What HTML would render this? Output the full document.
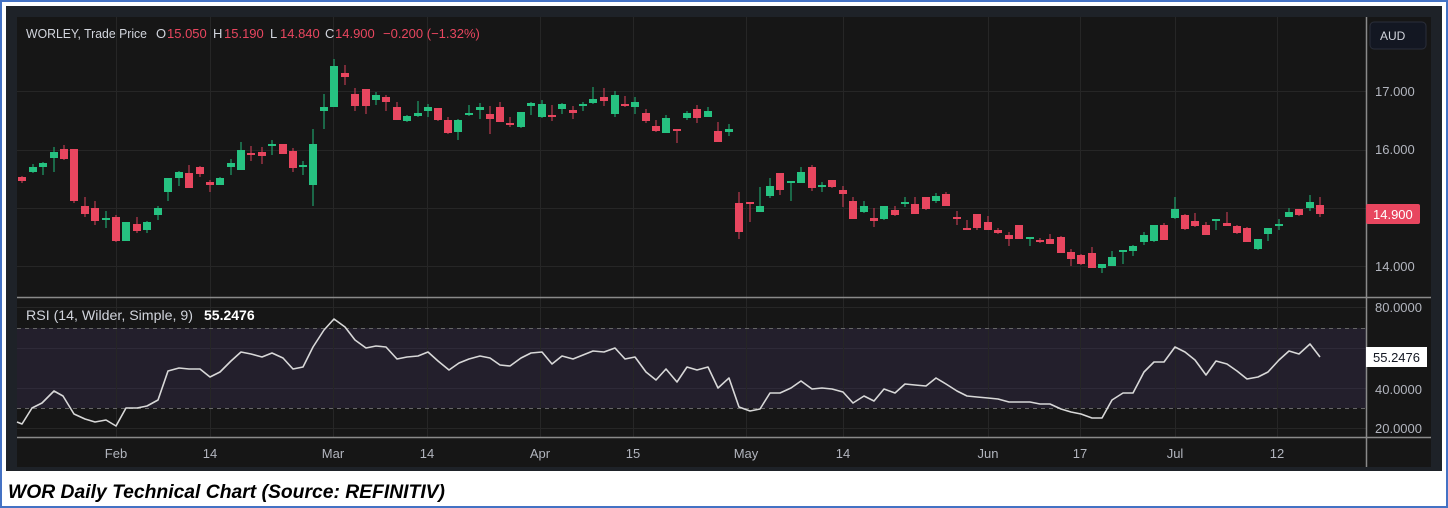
<!DOCTYPE html>
<html><head><meta charset="utf-8"><style>
html,body{margin:0;padding:0;background:#fff;width:1448px;height:508px;overflow:hidden}
svg{display:block}
text{font-family:"Liberation Sans",sans-serif}
</style></head><body>
<svg width="1448" height="508" viewBox="0 0 1448 508" xmlns="http://www.w3.org/2000/svg">
<rect x="1" y="1" width="1446" height="506" fill="#fff" stroke="#4472c4" stroke-width="2"/>
<rect x="6" y="6" width="1436" height="465" fill="#1e2228"/>
<rect x="17" y="17" width="1414" height="450" fill="#161616"/>
<rect x="17" y="328" width="1349" height="80" fill="#231f2c"/>
<g stroke="#262626" stroke-width="1">
<line x1="17" y1="91.5" x2="1366" y2="91.5"/><line x1="17" y1="150.5" x2="1366" y2="150.5"/><line x1="17" y1="208.5" x2="1366" y2="208.5"/><line x1="17" y1="266.5" x2="1366" y2="266.5"/>
<line x1="17" y1="348.5" x2="1366" y2="348.5" stroke="#2e2a38"/><line x1="17" y1="388.5" x2="1366" y2="388.5" stroke="#2e2a38"/><line x1="17" y1="307.5" x2="1366" y2="307.5"/><line x1="17" y1="428.5" x2="1366" y2="428.5"/>
<line x1="116.5" y1="17" x2="116.5" y2="437"/><line x1="210.5" y1="17" x2="210.5" y2="437"/><line x1="333.5" y1="17" x2="333.5" y2="437"/><line x1="427.5" y1="17" x2="427.5" y2="437"/><line x1="540.5" y1="17" x2="540.5" y2="437"/><line x1="633.5" y1="17" x2="633.5" y2="437"/><line x1="746.5" y1="17" x2="746.5" y2="437"/><line x1="843.5" y1="17" x2="843.5" y2="437"/><line x1="988.5" y1="17" x2="988.5" y2="437"/><line x1="1080.5" y1="17" x2="1080.5" y2="437"/><line x1="1175.5" y1="17" x2="1175.5" y2="437"/><line x1="1277.5" y1="17" x2="1277.5" y2="437"/>
</g>
<g stroke="#666" stroke-dasharray="4 4" stroke-width="1"><line x1="17" y1="328.5" x2="1366" y2="328.5"/><line x1="17" y1="408.5" x2="1366" y2="408.5"/></g>
<g stroke="#8a8a8a" stroke-width="1.5"><line x1="17" y1="297.5" x2="1431" y2="297.5"/><line x1="17" y1="437.5" x2="1431" y2="437.5"/><line x1="1366.5" y1="17" x2="1366.5" y2="467"/></g>

<path stroke="#1f9e6a" stroke-width="1.2" fill="none" d="M33 164V173M43 162V175M54 147V172M106 211V228M126 222V241M147 221V233M158 206V220M168 178V201M179 171V186M220 177V185M231 159V175M241 142V170M272 140V155M303 161V175M313 129V206M324 94V129M334 59V107M376 92V105M407 115V122M418 101V117M428 104V117M458 119V140M469 105V116M480 103V119M521 112V128M531 102V115M542 100V118M562 103V114M583 102V111M593 87V104M615 91V117M635 97V114M666 115V133M687 111V120M708 107V117M729 124V136M760 187V212M770 178V198M791 181V201M801 167V183M822 182V192M864 201V213M884 206V220M905 197V207M936 193V203M1030 237V246M1102 264V273M1112 251V266M1123 250V264M1133 245V256M1144 232V245M1154 225V242M1175 197V219M1216 219V230M1258 239V250M1268 228V241M1279 219V230M1289 208V217M1310 195V211"/>
<g fill="#26c281">
<rect x="29" y="167" width="8" height="5"/><rect x="39" y="163" width="8" height="4"/><rect x="50" y="152" width="8" height="6"/><rect x="102" y="218" width="8" height="2"/><rect x="122" y="222" width="8" height="19"/><rect x="143" y="222" width="8" height="8"/><rect x="154" y="208" width="8" height="7"/><rect x="164" y="178" width="8" height="14"/><rect x="175" y="172" width="8" height="6"/><rect x="216" y="178" width="8" height="7"/><rect x="227" y="163" width="8" height="4"/><rect x="237" y="150" width="8" height="20"/><rect x="268" y="144" width="8" height="2"/><rect x="299" y="165" width="8" height="2"/><rect x="309" y="144" width="8" height="41"/><rect x="320" y="107" width="8" height="4"/><rect x="330" y="66" width="8" height="41"/><rect x="372" y="95" width="8" height="5"/><rect x="403" y="116" width="8" height="5"/><rect x="414" y="113" width="8" height="3"/><rect x="424" y="107" width="8" height="4"/><rect x="454" y="120" width="8" height="12"/><rect x="465" y="113" width="8" height="2"/><rect x="476" y="107" width="8" height="3"/><rect x="517" y="112" width="8" height="15"/><rect x="527" y="103" width="8" height="3"/><rect x="538" y="104" width="8" height="13"/><rect x="558" y="104" width="8" height="5"/><rect x="579" y="104" width="8" height="2"/><rect x="589" y="99" width="8" height="4"/><rect x="611" y="95" width="8" height="19"/><rect x="631" y="102" width="8" height="5"/><rect x="662" y="118" width="8" height="15"/><rect x="683" y="113" width="8" height="5"/><rect x="704" y="111" width="8" height="6"/><rect x="725" y="129" width="8" height="3"/><rect x="756" y="206" width="8" height="6"/><rect x="766" y="186" width="8" height="10"/><rect x="787" y="181" width="8" height="2"/><rect x="797" y="172" width="8" height="11"/><rect x="818" y="185" width="8" height="2"/><rect x="860" y="206" width="8" height="6"/><rect x="880" y="206" width="8" height="13"/><rect x="901" y="202" width="8" height="2"/><rect x="932" y="196" width="8" height="5"/><rect x="1026" y="237" width="8" height="2"/><rect x="1098" y="264" width="8" height="4"/><rect x="1108" y="257" width="8" height="9"/><rect x="1119" y="250" width="8" height="2"/><rect x="1129" y="246" width="8" height="5"/><rect x="1140" y="235" width="8" height="7"/><rect x="1150" y="225" width="8" height="16"/><rect x="1171" y="209" width="8" height="9"/><rect x="1212" y="219" width="8" height="2"/><rect x="1254" y="239" width="8" height="10"/><rect x="1264" y="228" width="8" height="6"/><rect x="1275" y="224" width="8" height="2"/><rect x="1285" y="212" width="8" height="5"/><rect x="1306" y="202" width="8" height="6"/>
</g>
<path stroke="#b83a50" stroke-width="1.2" fill="none" d="M22 176V183M64 145V160M74 149V203M85 197V217M95 201V225M116 215V242M137 217V233M189 165V188M200 166V177M210 180V192M251 146V161M262 147V164M283 144V154M293 148V172M345 65V85M355 88V111M366 89V114M386 95V111M397 102V120M438 108V121M448 117V134M490 106V134M500 102V122M510 117V127M552 105V121M573 106V119M604 88V106M625 96V107M646 109V123M656 120V132M677 129V143M697 105V123M718 122V142M739 192V239M750 202V222M780 173V195M812 165V191M832 180V188M843 186V207M853 197V219M874 208V227M895 206V216M915 197V214M926 197V210M946 192V206M957 211V225M967 220V230M977 214V230M988 216V230M998 228V234M1009 232V246M1019 225V239M1040 238V243M1050 234V244M1061 236V253M1071 249V266M1081 254V265M1092 247V268M1164 223V240M1185 214V230M1195 213V227M1206 222V235M1227 212V226M1237 225V234M1247 227V242M1299 209V216M1320 197V217"/>
<g fill="#e8465f">
<rect x="18" y="177" width="8" height="4"/><rect x="60" y="149" width="8" height="10"/><rect x="70" y="149" width="8" height="52"/><rect x="81" y="206" width="8" height="8"/><rect x="91" y="208" width="8" height="13"/><rect x="112" y="217" width="8" height="24"/><rect x="133" y="224" width="8" height="7"/><rect x="185" y="173" width="8" height="15"/><rect x="196" y="167" width="8" height="7"/><rect x="206" y="182" width="8" height="3"/><rect x="247" y="153" width="8" height="2"/><rect x="258" y="152" width="8" height="4"/><rect x="279" y="144" width="8" height="10"/><rect x="289" y="151" width="8" height="17"/><rect x="341" y="73" width="8" height="4"/><rect x="351" y="94" width="8" height="12"/><rect x="362" y="89" width="8" height="17"/><rect x="382" y="97" width="8" height="5"/><rect x="393" y="107" width="8" height="13"/><rect x="434" y="108" width="8" height="12"/><rect x="444" y="120" width="8" height="13"/><rect x="486" y="114" width="8" height="5"/><rect x="496" y="107" width="8" height="15"/><rect x="506" y="123" width="8" height="2"/><rect x="548" y="115" width="8" height="2"/><rect x="569" y="110" width="8" height="3"/><rect x="600" y="97" width="8" height="4"/><rect x="621" y="104" width="8" height="2"/><rect x="642" y="113" width="8" height="8"/><rect x="652" y="126" width="8" height="5"/><rect x="673" y="129" width="8" height="2"/><rect x="693" y="109" width="8" height="9"/><rect x="714" y="131" width="8" height="11"/><rect x="735" y="203" width="8" height="29"/><rect x="746" y="202" width="8" height="2"/><rect x="776" y="173" width="8" height="17"/><rect x="808" y="167" width="8" height="21"/><rect x="828" y="180" width="8" height="7"/><rect x="839" y="190" width="8" height="4"/><rect x="849" y="201" width="8" height="18"/><rect x="870" y="218" width="8" height="3"/><rect x="891" y="210" width="8" height="5"/><rect x="911" y="204" width="8" height="10"/><rect x="922" y="197" width="8" height="12"/><rect x="942" y="194" width="8" height="12"/><rect x="953" y="217" width="8" height="2"/><rect x="963" y="228" width="8" height="2"/><rect x="973" y="214" width="8" height="14"/><rect x="984" y="222" width="8" height="8"/><rect x="994" y="230" width="8" height="3"/><rect x="1005" y="235" width="8" height="4"/><rect x="1015" y="225" width="8" height="14"/><rect x="1036" y="240" width="8" height="2"/><rect x="1046" y="239" width="8" height="5"/><rect x="1057" y="237" width="8" height="16"/><rect x="1067" y="252" width="8" height="7"/><rect x="1077" y="255" width="8" height="9"/><rect x="1088" y="253" width="8" height="15"/><rect x="1160" y="225" width="8" height="15"/><rect x="1181" y="215" width="8" height="14"/><rect x="1191" y="221" width="8" height="5"/><rect x="1202" y="225" width="8" height="10"/><rect x="1223" y="223" width="8" height="3"/><rect x="1233" y="226" width="8" height="7"/><rect x="1243" y="228" width="8" height="14"/><rect x="1295" y="209" width="8" height="6"/><rect x="1316" y="205" width="8" height="9"/>
</g>

<polyline fill="none" stroke="#d8d8d8" stroke-width="1.6" stroke-linejoin="round" points="17,422 22,424 32,408 42,403 54,391 63,396 74,414 85,419 95,422 106,420 116,426 126,408 137,408 147,406 158,400 168,371 179,368 189,369 200,369 210,377 220,372 231,361 241,352 251,354 262,357 272,353 283,358 293,369 303,367 313,347 324,330 334,319 345,327 355,340 366,348 376,346 386,347 397,359 407,357 418,356 428,352 438,361 449,370 459,363 469,359 480,356 490,358 500,365 510,366 521,358 531,353 542,352 552,364 562,356 573,359 583,355 593,351 604,352 615,348 625,359 635,357 646,372 656,380 666,369 677,382 687,367 697,370 708,367 718,388 729,378 739,407 750,411 760,409 770,393 780,393 791,388 801,381 812,389 822,388 832,389 843,392 853,403 864,396 874,401 884,389 895,393 905,384 915,385 926,386 936,378 946,384 957,391 967,396 977,397 988,398 998,399 1009,402 1019,402 1030,402 1040,404 1050,404 1061,409 1071,412 1081,414 1092,418 1102,418 1112,400 1123,393 1133,393 1144,372 1154,362 1164,362 1175,347 1185,352 1195,360 1206,375 1216,361 1227,364 1237,371 1247,379 1258,377 1268,372 1279,360 1289,351 1299,354 1310,344 1320,357"/>

<g font-size="13" fill="#d1d4dc">
<text x="26" y="38" textLength="121" lengthAdjust="spacingAndGlyphs">WORLEY, Trade Price</text>
<text x="156" y="38">O</text><text x="167" y="38" fill="#e8465f">15.050</text>
<text x="213" y="38">H</text><text x="224" y="38" fill="#e8465f">15.190</text>
<text x="270" y="38">L</text><text x="280" y="38" fill="#e8465f">14.840</text>
<text x="325" y="38">C</text><text x="335" y="38" fill="#e8465f">14.900</text>
<text x="383" y="38" fill="#e8465f">−0.200 (−1.32%)</text>
<text x="26" y="320" font-size="14" textLength="167" lengthAdjust="spacingAndGlyphs">RSI (14, Wilder, Simple, 9)</text>
<text x="204" y="320" font-size="14" fill="#fff" font-weight="bold">55.2476</text>
</g>
<rect x="1370" y="22" width="56" height="27" rx="4" fill="#131722" stroke="#2a2e39"/>
<text x="1380" y="40" font-size="12" fill="#d1d4dc">AUD</text>
<g font-size="13" fill="#b2b5be">
<text x="1375" y="96">17.000</text><text x="1375" y="154">16.000</text><text x="1375" y="271">14.000</text>
<text x="1375" y="312">80.0000</text><text x="1375" y="394">40.0000</text><text x="1375" y="433">20.0000</text>
</g>
<rect x="1366" y="204" width="54" height="20" rx="2" fill="#e8465f"/>
<text x="1373" y="219" font-size="13" fill="#fff">14.900</text>
<rect x="1366" y="347" width="61" height="20" fill="#fff"/>
<text x="1373" y="362" font-size="13" fill="#131722">55.2476</text>
<g font-size="13" fill="#b2b5be" text-anchor="middle">
<text x="116" y="458">Feb</text><text x="210" y="458">14</text><text x="333" y="458">Mar</text><text x="427" y="458">14</text><text x="540" y="458">Apr</text><text x="633" y="458">15</text><text x="746" y="458">May</text><text x="843" y="458">14</text><text x="988" y="458">Jun</text><text x="1080" y="458">17</text><text x="1175" y="458">Jul</text><text x="1277" y="458">12</text>
</g>
<text x="8" y="498" font-size="19" font-weight="bold" font-style="italic" fill="#000" textLength="437" lengthAdjust="spacingAndGlyphs">WOR Daily Technical Chart (Source: REFINITIV)</text>
</svg>
</body></html>
